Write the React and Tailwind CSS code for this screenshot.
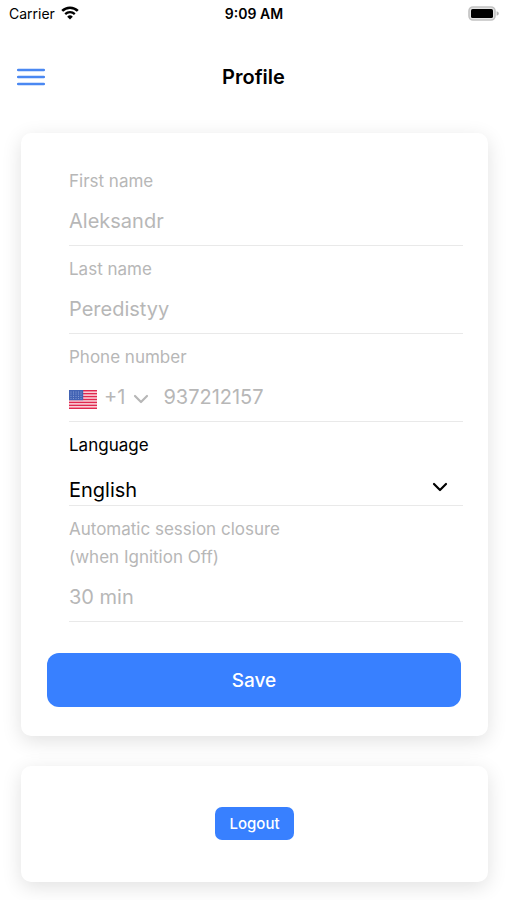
import React, { useState } from 'react';

const stripes = [0, 2, 4, 6, 8, 10, 12];

const WifiIcon = () => (
  <svg className="w-[18px] h-[14px]" viewBox="0 0 18 14" fill="none" aria-hidden="true">
    <path d="M1.2 4.9a11.2 11.2 0 0 1 15.6 0" stroke="#000" strokeWidth="2.7" />
    <path d="M4.2 8.1a7 7 0 0 1 9.6 0" stroke="#000" strokeWidth="2.3" />
    <path d="M9 13.6 6.2 10.7a4 4 0 0 1 5.6 0z" fill="#000" />
  </svg>
);

const BatteryIcon = () => (
  <svg className="w-[31px] h-[15px]" viewBox="0 0 31 15" aria-hidden="true">
    <rect x="1" y="1" width="26" height="13" rx="4" fill="#e4e4e4" stroke="#c2c2c2" strokeWidth="1.6" />
    <rect x="3" y="3" width="22" height="9" rx="1.6" fill="#000" />
    <path d="M28.6 5.2c1.6.5 2.2 1.3 2.2 2.3s-.6 1.8-2.2 2.3z" fill="#b5b5b5" />
  </svg>
);

const MenuIcon = () => (
  <svg className="w-7 h-[18px]" viewBox="0 0 28 18" fill="none" aria-hidden="true">
    <path d="M1.2 2h25.6M1.2 9h25.6M1.2 16h25.6" stroke="#4a88f2" strokeWidth="2.5" strokeLinecap="round" />
  </svg>
);

const ChevronIcon = ({ className }) => (
  <svg className={className} viewBox="0 0 16 10" fill="none" aria-hidden="true">
    <path d="m2 2 6 6 6-6" stroke="currentColor" strokeWidth="2.2" strokeLinecap="round" strokeLinejoin="round" />
  </svg>
);

const FlagIcon = () => (
  <svg className="mt-1 w-7 h-[19px]" viewBox="0 0 28 19.5" preserveAspectRatio="none" aria-hidden="true">
    <rect width="28" height="19.5" fill="#fbdde3" />
    {stripes.map((row) => (
      <rect key={row} y={row * 1.5} width="28" height="1.5" fill="#e0284f" />
    ))}
    <rect width="14.2" height="10.5" fill="#4263b4" />
    {[2, 4.2, 6.4, 8.6].map((y) =>
      [2, 4.5, 7, 9.5, 12].map((x) => (
        <circle key={`${x}-${y}`} cx={x} cy={y} r="0.5" fill="#c3d0f0" />
      ))
    )}
  </svg>
);

const Field = ({ id, label, children }) => (
  <div className="pt-[9px]">
    <label htmlFor={id} className="block text-[17px] leading-7 text-[#b7b7b7]">
      {label}
    </label>
    <div className="mt-1 h-[47px] pb-[2px] flex items-center border-b border-[#e9e9e9] text-[20px] text-[#b7b7b7]">
      {children}
    </div>
  </div>
);

const App = () => {
  const [language, setLanguage] = useState('English');

  return (
    <div className="min-h-screen bg-white text-black font-['Inter',sans-serif]">
      <div className="grid grid-cols-3 items-center h-[26px] pl-[9px] pr-[8px]">
        <div className="flex items-center gap-[6px] text-[14px]">
          <span>Carrier</span>
          <WifiIcon />
        </div>
        <div className="text-center text-[14px] font-semibold">9:09 AM</div>
        <div className="flex justify-end">
          <BatteryIcon />
        </div>
      </div>

      <header className="grid grid-cols-3 items-center h-[102px] px-[17px]">
        <button type="button" aria-label="Menu" className="w-7 flex">
          <MenuIcon />
        </button>
        <h1 className="text-center text-[20px] font-semibold">Profile</h1>
      </header>

      <main className="flex flex-col gap-[30px] pt-[5px] pb-[18px] pl-[21px] pr-[19px]">
        <form
          onSubmit={(e) => e.preventDefault()}
          className="rounded-[10px] bg-white pt-[25px] pb-[29px] shadow-[0_5px_20px_rgba(0,0,0,0.12)]"
        >
          <div className="pl-12 pr-[25px]">
            <Field id="first-name" label="First name">
              <input id="first-name" type="text" defaultValue="Aleksandr" disabled className="w-full bg-transparent" />
            </Field>
            <Field id="last-name" label="Last name">
              <input id="last-name" type="text" defaultValue="Peredistyy" disabled className="w-full bg-transparent" />
            </Field>
            <Field id="phone" label="Phone number">
              <button type="button" disabled aria-label="Country code" className="flex items-center shrink-0">
                <FlagIcon />
                <span className="ml-[7px]">+1</span>
                <ChevronIcon className="mt-1 ml-2 w-4 h-[10px]" />
              </button>
              <input id="phone" type="tel" defaultValue="937212157" disabled className="ml-[14px] min-w-0 flex-1 bg-transparent" />
            </Field>

            <div className="pt-[9px]">
              <label htmlFor="language" className="block text-[17px] leading-7">
                Language
              </label>
              <div className="relative mt-[15px] border-b border-[#e9e9e9]">
                <select
                  id="language"
                  value={language}
                  onChange={(e) => setLanguage(e.target.value)}
                  className="block w-full h-[31px] appearance-none bg-transparent text-[20px]"
                >
                  <option>English</option>
                </select>
                <ChevronIcon className="absolute right-[15px] top-2 w-4 h-[10px] pointer-events-none" />
              </div>
            </div>

            <Field
              id="session"
              label={
                <>
                  Automatic session closure
                  <br />
                  (when Ignition Off)
                </>
              }
            >
              <input id="session" type="text" defaultValue="30 min" disabled className="w-full bg-transparent" />
            </Field>
          </div>

          <div className="mt-[31px] pl-[26px] pr-[27px]">
            <button type="submit" className="w-full h-[54px] pt-[2px] rounded-xl bg-[#3880ff] text-white text-[19px] font-medium">
              Save
            </button>
          </div>
        </form>

        <section className="flex justify-center rounded-[10px] bg-white pt-[41px] pb-[42px] shadow-[0_5px_20px_rgba(0,0,0,0.12)]">
          <button type="button" className="h-[33px] px-[14px] pt-[2px] rounded-[7px] bg-[#3880ff] text-white text-[15px] font-medium">
            Logout
          </button>
        </section>
      </main>
    </div>
  );
};

export default App;
